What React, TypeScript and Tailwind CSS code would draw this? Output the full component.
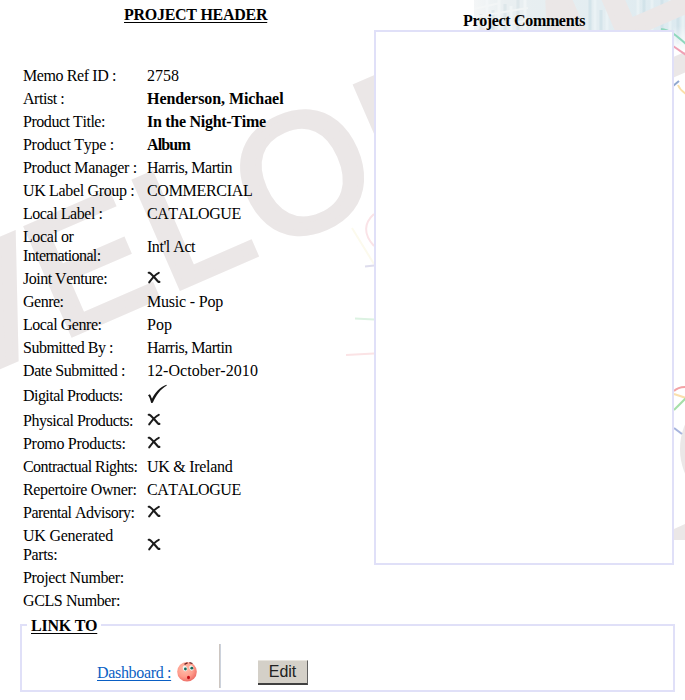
import type { ReactNode } from "react";

const Cross = () => (
  <svg className="mb-[2px] block h-[13px] w-[14px]" viewBox="0 0 14 13" fill="none" stroke="#1c1c1c" strokeLinecap="round">
    <path d="M1.7 1.8H2.6C5.2 3.4 8.2 7.4 11.4 10.9H12.4" strokeWidth="2.1" />
    <path d="M11.8 1.8C8.4 3.4 4.8 7.6 2.2 11.4" strokeWidth="2" />
  </svg>
);

const Check = () => (
  <svg className="mb-[3px] block h-[20px] w-[20px]" viewBox="0 0 20 20" fill="#151515">
    <path d="M1 11.3 L2.8 10.2 C3.7 11.2 4.2 12.8 5 14.8 C8 8.5 13 3 19.5 .8 L19.8 1.4 C13.5 5 9 11 5.8 18.8 L4.2 19 C3.2 15.5 2.4 12.8 1 11.3Z" />
  </svg>
);

type Row = { label: ReactNode; value?: ReactNode; height?: string };

const rows: Row[] = [
  { label: <span className="tracking-[-0.4px]">Memo Ref ID :</span>, value: "2758" },
  { label: <span className="tracking-[-0.45px]">Artist :</span>, value: <b className="tracking-[-0.07px]">Henderson, Michael</b> },
  { label: <span className="tracking-[-0.46px]">Product Title:</span>, value: <b className="tracking-[-0.28px]">In the Night-Time</b> },
  { label: <span className="tracking-[-0.3px]">Product Type :</span>, value: <b className="tracking-[-0.85px]">Album</b> },
  { label: <span className="tracking-[-0.3px]">Product Manager :</span>, value: <span className="tracking-[-0.46px]">Harris, Martin</span> },
  { label: <span className="tracking-[-0.34px]">UK Label Group :</span>, value: <span className="tracking-[-0.3px]">COMMERCIAL</span> },
  { label: <span className="tracking-[-0.45px]">Local Label :</span>, value: <span className="tracking-[-0.45px]">CATALOGUE</span> },
  {
    label: <><span className="tracking-[-0.4px]">Local or</span><br /><span className="tracking-[-0.62px]">International:</span></>,
    value: <span className="tracking-[-0.46px]">Int'l Act</span>,
    height: "h-[42px]",
  },
  { label: <span className="tracking-[-0.5px]">Joint Venture:</span>, value: <Cross /> },
  { label: <span className="tracking-[-0.5px]">Genre:</span>, value: <span className="tracking-[-0.2px]">Music - Pop</span> },
  { label: <span className="tracking-[-0.45px]">Local Genre:</span>, value: "Pop" },
  { label: <span className="tracking-[-0.5px]">Submitted By :</span>, value: <span className="tracking-[-0.46px]">Harris, Martin</span> },
  { label: <span className="tracking-[-0.4px]">Date Submitted :</span>, value: <span className="tracking-[0.05px]">12-October-2010</span> },
  { label: <span className="tracking-[-0.55px]">Digital Products:</span>, value: <Check />, height: "h-[27px]" },
  { label: <span className="tracking-[-0.48px]">Physical Products:</span>, value: <Cross /> },
  { label: <span className="tracking-[-0.3px]">Promo Products:</span>, value: <Cross /> },
  { label: <span className="tracking-[-0.55px]">Contractual Rights:</span>, value: <span className="tracking-[-0.28px]">UK &amp; Ireland</span> },
  { label: <span className="tracking-[-0.35px]">Repertoire Owner:</span>, value: <span className="tracking-[-0.45px]">CATALOGUE</span> },
  { label: <span className="tracking-[-0.5px]">Parental Advisory:</span>, value: <Cross /> },
  {
    label: <><span className="tracking-[-0.24px]">UK Generated</span><br /><span className="tracking-[-0.35px]">Parts:</span></>,
    value: <Cross />,
    height: "h-[42px]",
  },
  { label: <span className="tracking-[-0.35px]">Project Number:</span> },
  { label: <span className="tracking-[-0.4px]">GCLS Number:</span> },
];

const Backdrop = () => (
  <svg className="absolute inset-0 -z-10 h-[700px] w-[685px]" viewBox="0 0 685 700" aria-hidden="true">
    <defs>
      <linearGradient id="sky" x1="0" x2="1">
        <stop offset="0" stopColor="#f4f6f7" />
        <stop offset="0.15" stopColor="#e9eff1" />
        <stop offset="0.6" stopColor="#e3edf1" />
        <stop offset="1" stopColor="#dceaf0" />
      </linearGradient>
      <linearGradient id="ground" x1="0" x2="0" y1="0" y2="1">
        <stop offset="0" stopColor="#fff" stopOpacity="0" />
        <stop offset="1" stopColor="#fff" />
      </linearGradient>
    </defs>
    {/* faded office facade */}
    <rect x="474" y="0" width="211" height="50" fill="url(#sky)" />
    <g strokeWidth="3" opacity="0.6">
      <path d="M481 14V31M493 10V31M505 4V31M518 0V31" stroke="#d6e2e6" />
      <path d="M487 0V31M499 0V31M511 6V31M525 0V31" stroke="#f6f9fa" />
      <path d="M474 9L500 3M474 17L528 8M500 25L532 20" stroke="#f7f9f9" strokeWidth="2" />
      <path d="M590 0V31M601 10V31M644 0V44M662 0V44M678 0V44" stroke="#cbdfe7" />
      <path d="M595 0V31M607 0V31M638 0V44M652 0V44M670 0V44M683 0V44" stroke="#eff6f8" />
    </g>
    <rect x="673" y="26" width="12" height="26" fill="url(#ground)" />
    <g
      transform="translate(168.8 292.6) rotate(-23.5)"
      fill="#ebe7e7"
      stroke="#ebe7e7"
      strokeWidth="6"
      className="[font-family:'Liberation_Sans',Arial,sans-serif] text-[168px] tracking-[5px] [font-kerning:none]"
    >
      <text x="-474.5" y="0">DEV</text>
      <text x="-118" y="-0.5">E</text>
      <text x="0" y="0" transform="translate(-1 0) scale(1.08 1)">L</text>
      <text x="105" y="1">OPMENT</text>
    </g>
    <ellipse cx="730" cy="449" rx="50" ry="56" fill="#ebe7e7" />
    <path d="M674 529L685 524V540H674Z" fill="#ebe7e7" />
    {/* coloured network cables */}
    <g fill="none" strokeWidth="2">
      <path d="M661 29C670 30 677 36 686 44" stroke="#8fd8bd" />
      <path d="M673 46L686 55" stroke="#f0a0b4" />
      <path d="M673 86L679 81" stroke="#91a8cf" />
      <path d="M678 85C680 90 683 92 686 94" stroke="#fae0a8" />
      <path d="M674 391C677 388 681 387 686 387" stroke="#f3a3a6" />
      <path d="M674 394L686 398" stroke="#fadfad" />
      <path d="M674 410L686 398" stroke="#a5dfa8" />
      <path d="M674 428L682 434" stroke="#a7b4dd" />
      <path d="M374 214C364 223 363 234 374 246" stroke="#fae3e7" />
      <path d="M352 228L374 264" stroke="#fcfaed" />
      <path d="M365 266.5L374 265.5" stroke="#dedded" />
      <path d="M355 318.5L374 319.5" stroke="#dcf2e2" />
      <path d="M346 355L374 353.5" stroke="#fbe3e5" />
    </g>
  </svg>
);

const WorriedFace = () => (
  <svg className="-mt-px ml-[6px] h-[21px] w-[20px]" viewBox="0 0 20 21">
    <defs>
      <radialGradient id="face" cx=".4" cy=".35" r=".65">
        <stop offset="0" stopColor="#ffc0ad" />
        <stop offset=".65" stopColor="#ff9c8b" />
        <stop offset="1" stopColor="#ef7169" />
      </radialGradient>
    </defs>
    <circle cx="10" cy="10.7" r="9.8" fill="url(#face)" />
    <ellipse cx="8" cy="7.5" rx="2.1" ry="2.8" fill="#edf8f5" transform="rotate(-18 8 7.5)" />
    <ellipse cx="14.3" cy="7" rx="2" ry="2.7" fill="#edf8f5" transform="rotate(-18 14.3 7)" />
    <circle cx="8.4" cy="8" r="1.4" fill="#17695b" />
    <circle cx="14.8" cy="7.2" r="1.4" fill="#17695b" />
    <path d="M7.5 3.4L10.6 1.7M12.4 1.6L15.5 2.5" stroke="#6b2222" strokeWidth="1.3" fill="none" />
    <ellipse cx="11.5" cy="16.5" rx="1.5" ry="1.8" fill="#c40e16" />
  </svg>
);

export default function App() {
  return (
    <div className="relative isolate h-[700px] w-[685px] overflow-hidden bg-white [font-family:'Liberation_Serif','Times_New_Roman',serif] text-[16px] leading-[19px] text-black [font-kerning:none]">
      <Backdrop />
      <div className="flex h-[624px]">
        <section className="w-[374px] pl-[23px] pt-[5px]">
          <h1 className="ml-[101px] h-[59px] font-bold tracking-[-0.28px] underline underline-offset-2">PROJECT HEADER</h1>
          <dl>
            {rows.map((row, i) => (
              <div key={i} className={`flex items-center ${row.height ?? "h-[23px]"}`}>
                <dt className="w-[124px] whitespace-nowrap">{row.label}</dt>
                <dd className="whitespace-nowrap">{row.value}</dd>
              </div>
            ))}
          </dl>
        </section>
        <section className="w-[300px] pt-[11px]">
          <h2 className="pl-[89px] font-bold tracking-[-0.34px]">Project Comments</h2>
          <div className="h-[535px] border-2 border-[#e0e0f8] bg-white" />
        </section>
      </div>
      <section className="ml-5 h-[68px] w-[655px] border-2 border-[#e0e0f8]">
        <h2 className="-mt-[10px] ml-[5px] w-[74px] bg-white pl-1 font-bold tracking-[-0.25px] underline underline-offset-2">LINK TO</h2>
        <div className="mt-[9px] flex h-[44px]">
          <div className="flex w-[197px] items-start pl-[75px] pt-[18px]">
            <a className="h-[19px] pt-px tracking-[-0.33px] text-[#0a5fc4] underline underline-offset-2" href="#dashboard">Dashboard :</a>
            <WorriedFace />
          </div>
          <div className="w-[2px] border-l border-r border-l-[#cdc6c1] border-r-[#ccd2dc]" />
          <button className="ml-[37px] mt-4 h-[25px] w-[50px] border-b-2 border-r border-t border-b-[#404040] border-r-[#606060] border-t-[#e8e5df] bg-[#d4d0c8] [font-family:'Liberation_Sans',Arial,sans-serif] text-[16px] leading-[22px] text-[#222]">
            Edit
          </button>
        </div>
      </section>
    </div>
  );
}
